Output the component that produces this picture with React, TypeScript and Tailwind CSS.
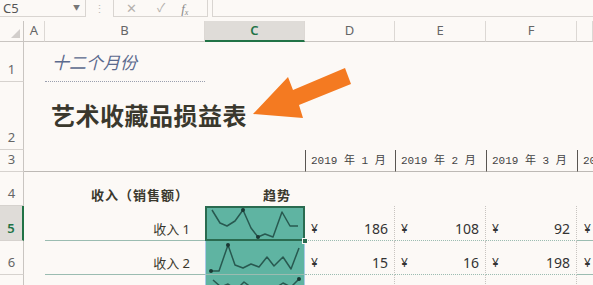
import React from 'react';

type Pt = [number, number];

const spark5: Pt[] = [[7, 4], [15, 17], [22, 20], [30, 15], [38, 4], [46, 22], [53, 31], [60, 28], [68, 31], [77, 6], [85, 20], [93, 20]];
const spark6: Pt[] = [[5, 30], [13, 30], [22, 4], [29, 24], [37, 27], [45, 23], [53, 26], [61, 16], [68, 25], [77, 16], [85, 28], [93, 7]];
const spark7: Pt[] = [[7, 5], [15, 12], [22, 9], [30, 15], [38, 7], [46, 13], [53, 16], [60, 11], [68, 14], [77, 8], [85, 12], [93, 4]];

const Spark: React.FC<{ pts: Pt[]; marks: number[] }> = ({ pts, marks }) => (
  <svg className="block" width="100" height="35" viewBox="0 0 100 35">
    <polyline points={pts.map((p) => p.join(',')).join(' ')} fill="none" stroke="#285950" strokeWidth="1.5" strokeLinejoin="round" />
    {marks.map((i) => (
      <circle key={i} cx={pts[i][0]} cy={pts[i][1]} r="2" fill="#1b3833" />
    ))}
  </svg>
);

const ColHead: React.FC<{ label?: string; sel?: boolean }> = ({ label, sel }) => (
  <div
    className={
      'flex items-center justify-center border-r border-[#dcd8d4] text-[13px] ' +
      (sel
        ? 'bg-[#dfdcd8] text-[#217346] font-semibold border-b-2 border-b-[#217346]'
        : 'text-[#666] border-b border-b-[#c9c5c1]')
    }
  >
    {label}
  </div>
);

const RowHead: React.FC<{ n: number; sel?: boolean }> = ({ n, sel }) => (
  <div
    className={
      'flex items-end justify-center pb-[2px] border-b border-[#d6d2ce] text-[13px] ' +
      (sel ? 'bg-[#dfdcd8] text-[#217346] font-semibold border-r-2 border-r-[#217346]' : 'text-[#666] border-r border-r-[#c9c5c1]')
    }
  >
    {n}
  </div>
);

const DateCell: React.FC<{ m: number }> = ({ m }) => (
  <div className="flex items-center overflow-hidden whitespace-nowrap border-l-[1.5px] border-[#5a5652] border-b border-b-[#bdb9b5] pl-[5px] pt-[1px] font-['Liberation_Mono','Noto_Sans_CJK_SC',monospace] text-[11px] text-[#444]">
    2019 年 {m} 月
  </div>
);

const Money: React.FC<{ v: number; last?: boolean }> = ({ v, last }) => (
  <div className={'flex items-end justify-between pb-[1px] pl-[6px] pr-[6px] border-b border-b-[#9bbcb1] text-[14px] text-[#333] ' + (last ? '' : 'border-r border-r-[#c8c4c0] border-dotted')}>
    <span className="text-[12px] mb-[1px]">¥</span>
    <span>{v}</span>
  </div>
);

export default function App() {
  return (
    <div className="w-[593px] h-[285px] overflow-hidden bg-[#fcf9f6] font-['Noto_Sans','Noto_Sans_CJK_SC',sans-serif] text-[#333]">
      {/* formula bar */}
      <div className="flex h-[17px] items-stretch leading-none">
        <div className="relative flex w-[86px] items-center border-r border-b border-[#d9d5d1] pl-[3px] text-[13px] text-[#555]">
          C5
          <span className="absolute right-[5px] top-[4px] text-[7px] text-[#777]">▼</span>
        </div>
        <div className="flex w-[27px] items-center justify-center text-[11px] text-[#bbb]">⋮</div>
        <div className="flex w-[95px] items-center border-l border-r border-b border-[#d9d5d1] text-[#b5b1ad]">
          <span className="ml-[12px] text-[13px]">✕</span>
          <span className="ml-[20px] text-[12px]">✓</span>
          <span className="ml-[16px] font-['Liberation_Serif',serif] italic text-[13px] text-[#888]">
            f<sub className="text-[8px]">x</sub>
          </span>
        </div>
        <div className="ml-[4px] flex-1 border-l border-b border-[#d9d5d1]" />
      </div>

      <div className="mt-[4px] grid grid-cols-[24px_21px_160px_100px_90px_91px_91px_1fr] grid-rows-[21px_40px_68px_22px_34px_35px_34px_35px]">
        {/* header row */}
        <div className="relative border-r border-b border-[#c9c5c1]">
          <svg className="absolute right-[3px] bottom-[3px]" width="9" height="9" viewBox="0 0 9 9">
            <polygon points="9,0 9,9 0,9" fill="#d2cecb" />
          </svg>
        </div>
        <ColHead label="A" />
        <ColHead label="B" />
        <ColHead label="C" sel />
        <ColHead label="D" />
        <ColHead label="E" />
        <ColHead label="F" />
        <ColHead />

        {/* row 1 */}
        <RowHead n={1} />
        <div />
        <div className="flex items-center border-b-[1.5px] border-dotted border-[#9a9fae] pl-[7px] pt-[2px] text-[17px] italic text-[#5b6a8e]">
          十二个月份
        </div>
        <div className="col-span-5" />

        {/* row 2 */}
        <RowHead n={2} />
        <div />
        <div className="col-span-3 flex items-center whitespace-nowrap pl-[6px] text-[24px] font-bold tracking-[0.5px] text-[#3a382d]">
          艺术收藏品损益表
        </div>
        <div className="col-span-3" />

        {/* row 3 */}
        <RowHead n={3} />
        <div className="border-b border-[#bdb9b5]" />
        <div className="border-b border-[#bdb9b5]" />
        <div className="border-b border-[#bdb9b5]" />
        <DateCell m={1} />
        <DateCell m={2} />
        <DateCell m={3} />
        <DateCell m={4} />

        {/* row 4 */}
        <RowHead n={4} />
        <div />
        <div className="flex items-end justify-end pr-[16px] pb-[1px] text-[13px] font-bold tracking-[1px] text-[#3a382d]">收入（销售额）</div>
        <div className="flex items-end pl-[58px] pb-[1px] text-[13px] font-bold tracking-[1px] text-[#3a382d]">趋势</div>
        <div className="col-span-4" />

        {/* row 5 */}
        <RowHead n={5} sel />
        <div />
        <div className="flex items-end justify-end pr-[15px] pb-[1px] border-b border-[#9bbcb1] text-[13px] text-[#3a382d]">收入 1</div>
        <div className="relative bg-[#5fb4a2]">
          <Spark pts={spark5} marks={[4, 6]} />
          <div className="absolute inset-0 border-2 border-[#2a6b50]" />
          <div className="absolute -right-[3px] -bottom-[3px] h-[6px] w-[6px] border border-[#fcf9f6] bg-[#2a6b50]" />
        </div>
        <Money v={186} />
        <Money v={108} />
        <Money v={92} />
        <div className="flex items-end pl-[7px] pb-[2px] border-b border-[#9bbcb1] text-[12px] text-[#333]">¥</div>

        {/* row 6 */}
        <RowHead n={6} />
        <div />
        <div className="flex items-end justify-end pr-[15px] pb-[1px] border-b border-[#9bbcb1] text-[13px] text-[#3a382d]">收入 2</div>
        <div className="bg-[#5fb4a2] border-x border-[#a9c9e6] border-b border-b-[#9bbcb1]">
          <Spark pts={spark6} marks={[0, 2]} />
        </div>
        <Money v={15} />
        <Money v={16} />
        <Money v={198} />
        <div className="flex items-end pl-[7px] pb-[2px] border-b border-[#9bbcb1] text-[12px] text-[#333]">¥</div>

        {/* row 7 */}
        <RowHead n={7} />
        <div />
        <div />
        <div className="bg-[#5fb4a2] border-x border-[#a9c9e6]">
          <Spark pts={spark7} marks={[11]} />
        </div>
        <div className="border-r border-dotted border-[#c8c4c0]" />
        <div className="border-r border-dotted border-[#c8c4c0]" />
        <div className="border-r border-dotted border-[#c8c4c0]" />
        <div />
      </div>

      {/* callout arrow */}
      <svg className="pointer-events-none absolute left-0 top-0" width="593" height="285">
        <polygon points="253,114 288,77 293,90 345,68 351,84 299,105 303,118" fill="#f47a21" />
      </svg>
    </div>
  );
}
